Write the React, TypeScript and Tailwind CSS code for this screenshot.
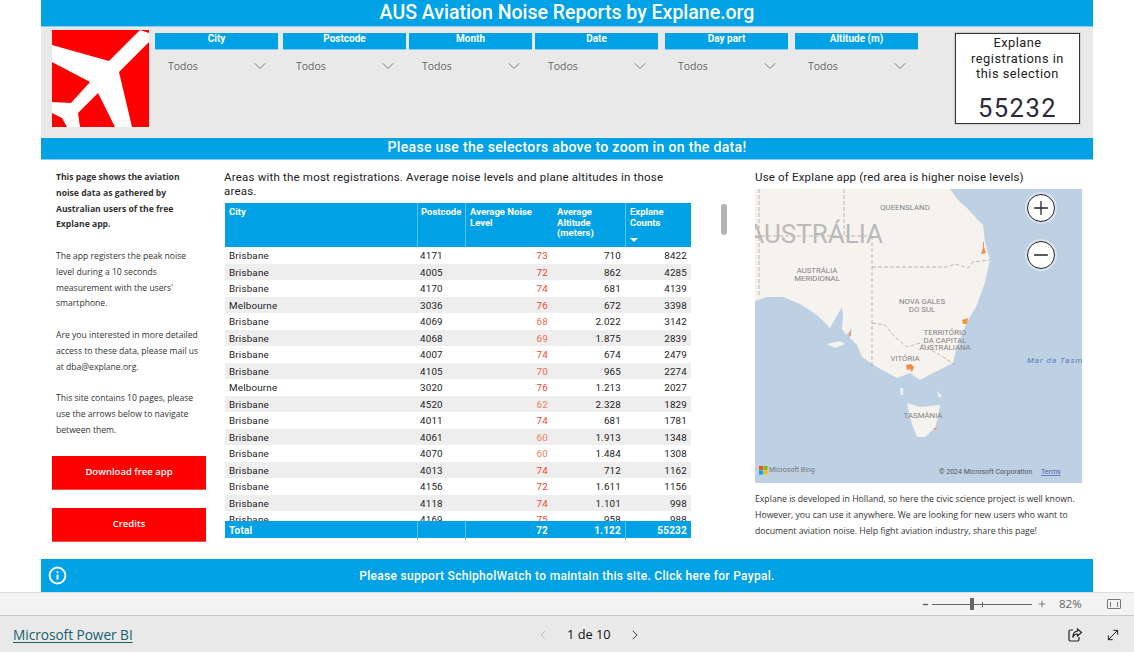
import { Info, ChevronLeft, ChevronRight, ChevronDown, Plus, Minus, MoveDiagonal } from 'lucide-react';

const din = 'font-["Roboto",sans-serif]';
const segoe = 'font-["Open_Sans",sans-serif]';

const SLICERS = [
    { label: 'City', cls: 'mr-[5px]' },
    { label: 'Postcode', cls: 'mr-[3px]' },
    { label: 'Month', cls: 'mr-[3px]' },
    { label: 'Date', cls: 'mr-[7px]' },
    { label: 'Day part', cls: 'mr-[7px]' },
    { label: 'Altitude (m)', cls: '' },
];

const ROWS: [string, string, number, string, string][] = [
    ['Brisbane', '4171', 73, '710', '8422'],
    ['Brisbane', '4005', 72, '862', '4285'],
    ['Brisbane', '4170', 74, '681', '4139'],
    ['Melbourne', '3036', 76, '672', '3398'],
    ['Brisbane', '4069', 68, '2.022', '3142'],
    ['Brisbane', '4068', 69, '1.875', '2839'],
    ['Brisbane', '4007', 74, '674', '2479'],
    ['Brisbane', '4105', 70, '965', '2274'],
    ['Melbourne', '3020', 76, '1.213', '2027'],
    ['Brisbane', '4520', 62, '2.328', '1829'],
    ['Brisbane', '4011', 74, '681', '1781'],
    ['Brisbane', '4061', 60, '1.913', '1348'],
    ['Brisbane', '4070', 60, '1.484', '1308'],
    ['Brisbane', '4013', 74, '712', '1162'],
    ['Brisbane', '4156', 72, '1.611', '1156'],
    ['Brisbane', '4118', 74, '1.101', '998'],
    ['Brisbane', '4169', 75, '958', '988'],
];

const COLS = 'grid grid-cols-[192px_48px_88px_72px_66px]';

const Logo = () => (
    <svg className="w-[97px] h-[97px] shrink-0" viewBox="0 0 97 97">
        <rect width="97" height="97" fill="#ff0000" />
        <polygon
            fill="#ffffff"
            points="88,0 97,3 97,12 67,42 80,97 63,97 46,63 26,83 28,97 15,97 10,88 0,83 0,72 19,73 38,52 0,32 0,15 57,31"
        />
    </svg>
);

const MapDrawing = () => (
    <svg className="block w-[327px] h-[294px]" viewBox="0 0 327 294">
        <rect width="327" height="294" fill="#bed0e4" />
        <path
            fill="#f6f3ef"
            d="M0 0 L195 0 L203 11 L212 19 L222 30 L228 36 L229 45 L230 53 L235 71 L230 93 L222 116 L212 133 L205 150 L200 165 L198 174 L178 184 L165 191 L155 184 L142 189 L122 178 L107 168 L102 156 L95 149 L97 139 L91 146 L87 140 L88 126 L87 118 L80 130 L75 139 L62 126 L45 115 L28 108 L12 108 L0 112 Z"
        />
        <path fill="#f6f3ef" d="M72 155 L85 152 L90 155 L80 159 Z" />
        <path fill="#f6f3ef" d="M152 214 L165 218 L185 216 L183 228 L180 239 L170 248 L162 248 L158 238 L155 228 Z" />
        <path fill="#f6f3ef" d="M145 199 L148 199 L148 206 L146 206 Z M182 202 L187 207 L184 209 Z" />
        <g fill="none" stroke="#a8a8a8" strokeWidth="0.8" strokeDasharray="4 2">
            <path d="M4 0 L4 108" />
            <path d="M89 0 L89 47" />
            <path d="M0 47 L117 47" />
            <path d="M117 47 L117 179" />
            <path d="M117 78 L192 78 L200 75 L213 79 L218 73 L235 71" />
            <path d="M117 134 L130 136 L140 148 L152 158 L165 154 L178 162 L185 166 L200 176" />
        </g>
        <g fill="#f58a4b">
            <path d="M228 53 L229 53 L229 58 L231 64 L226 65 L228 59 Z" />
            <path d="M207 131 L213 129 L212 135 L208 135 Z" fill="#f7992f" />
            <path d="M94 146 L96 141 L96 146 L94 148 Z" />
            <path d="M151 176 L156 175 L159 178 L157 183 L155 180 L152 181 Z" />
            <path d="M178 239 L182 239 L181 241 Z" />
        </g>
        <g className='font-["Roboto",sans-serif]' fill="#828282" textAnchor="middle">
            <text x="128" y="54" fontSize="26" textAnchor="end" fill="#b9b9b9">AUSTRÁLIA</text>
            <text x="150" y="21" fontSize="7.8">QUEENSLAND</text>
            <text x="62" y="84" fontSize="7.8">AUSTRÁLIA</text>
            <text x="62" y="92" fontSize="7.8">MERIDIONAL</text>
            <text x="167" y="115" fontSize="7.8">NOVA GALES</text>
            <text x="167" y="123" fontSize="7.8">DO SUL</text>
            <text x="190" y="146" fontSize="7.8">TERRITÓRIO</text>
            <text x="190" y="153.5" fontSize="7.8">DA CAPITAL</text>
            <text x="190" y="161" fontSize="7.8">AUSTRALIANA</text>
            <text x="150" y="172" fontSize="7.8">VITÓRIA</text>
            <text x="168" y="229" fontSize="7.8">TASMÂNIA</text>
            <text x="272" y="174" fontSize="8" fill="#5a7fc0" fontStyle="italic" textAnchor="start" letterSpacing="1">Mar da Tasmânia</text>
            <text x="14" y="283" fontSize="7" textAnchor="start" fill="#777777">Microsoft Bing</text>
            <text x="184" y="285" fontSize="7" textAnchor="start" fill="#555555">© 2024 Microsoft Corporation</text>
            <text x="286" y="285" fontSize="7" textAnchor="start" fill="#4a5fb0" textDecoration="underline">Terms</text>
        </g>
        <rect x="4" y="277" width="4" height="4" fill="#f25022" />
        <rect x="8.5" y="277" width="4" height="4" fill="#7fba00" />
        <rect x="4" y="281.5" width="4" height="4" fill="#00a4ef" />
        <rect x="8.5" y="281.5" width="4" height="4" fill="#ffb900" />
    </svg>
);

const MapButton = ({ cls, children }: { cls: string; children: React.ReactNode }) => (
    <div className={`absolute left-[272px] w-[28px] h-[28px] rounded-full bg-white border-[1.5px] border-[#222222] ring-2 ring-white/40 flex items-center justify-center ${cls}`}>
        {children}
    </div>
);

const ShareIcon = () => (
    <svg className="w-[16px] h-[16px] mr-[22px]" viewBox="0 0 16 16" fill="none" stroke="#222222" strokeWidth="1.2">
        <path d="M6 3 H3.5 a1.5 1.5 0 0 0 -1.5 1.5 V12.5 a1.5 1.5 0 0 0 1.5 1.5 H10.5 a1.5 1.5 0 0 0 1.5 -1.5 V10" />
        <path d="M10.5 2 L14.5 5.5 L10.5 9 V7 C8 7 6.5 8.5 6 10.5 C5.8 7 7.5 4.5 10.5 4 Z" />
    </svg>
);

export default function App() {
    return (
        <div className={`w-[1134px] h-[652px] bg-white overflow-hidden flex flex-col ${din}`}>
            <div className="ml-[41px] w-[1052px] h-[592px] shrink-0 flex flex-col">
                {/* Title */}
                <div className="h-[27px] shrink-0 bg-[#00a2e5] border-b border-[#7fd0f2] flex items-center justify-center text-white text-[19.5px] font-medium">
                    AUS Aviation Noise Reports by Explane.org
                </div>

                {/* Slicers */}
                <div className="h-[111px] shrink-0 bg-[#e9e9e9] flex pl-[11px] pt-[3px]">
                    <Logo />
                    <div className="flex ml-[6px] pt-[3px]">
                        {SLICERS.map(s => (
                            <div key={s.label} className={`w-[123px] ${s.cls}`}>
                                <div className="h-[17px] bg-[#00a2e5] border-b border-[#7fd0f2] text-white text-[10px] font-bold text-center leading-[12px]">
                                    {s.label}
                                </div>
                                <div className={`flex items-center justify-between mt-[6px] pl-[13px] pr-[8px] text-[10.5px] text-[#666666] ${segoe}`}>
                                    <span className="pt-[1px]">Todos</span>
                                    <ChevronDown className="w-[20px] h-[20px] text-[#666666]" strokeWidth={1} />
                                </div>
                            </div>
                        ))}
                    </div>
                    <div className="ml-[37px] mt-[3px] w-[125px] h-[91px] bg-white border border-[#333333] shadow-[0_0_0_1px_#d0d0d0] flex flex-col items-center text-[#222222]">
                        <div className="text-[12.8px] leading-[15.5px] text-center tracking-[0.5px] mt-[1px]">
                            Explane<br />registrations in<br />this selection
                        </div>
                        <div className="text-[25.5px] leading-[30px] tracking-[1.5px] mt-[11px] text-[#2b2b38]">55232</div>
                    </div>
                </div>

                <div className="h-[22px] shrink-0 bg-[#00a2e5] border-b border-[#7fd0f2] pb-[1px] flex items-center justify-center text-white text-[14.1px] font-medium tracking-[0.3px]">
                    Please use the selectors above to zoom in on the data!
                </div>

                {/* Content */}
                <div className="h-[399px] shrink-0 flex">
                    <div className="w-[184px] shrink-0 pl-[11px] pt-[10px]">
                        <div className={`w-[150px] pl-[4px] text-[8.6px] leading-[15.8px] text-[#333333] ${segoe}`}>
                            <p className="font-bold mb-[15.8px]">This page shows the aviation noise data as gathered by Australian users of the free Explane app.</p>
                            <p className="mb-[15.8px]">The app registers the peak noise level during a 10 seconds measurement with the users' smartphone.</p>
                            <p className="mb-[15.8px]">Are you interested in more detailed access to these data, please mail us at dba@explane.org.</p>
                            <p>This site contains 10 pages, please use the arrows below to navigate between them.</p>
                        </div>
                        <div className={`mt-[17px] w-[154px] h-[34px] bg-[#ff0000] border-b border-[#ff5050] text-white text-[9.5px] font-semibold flex items-center justify-center ${segoe}`}>
                            Download free app
                        </div>
                        <div className={`mt-[18px] w-[154px] h-[34px] bg-[#ff0000] border-b border-[#ff5050] text-white text-[9.5px] font-semibold flex items-center justify-center ${segoe}`}>
                            Credits
                        </div>
                    </div>

                    <div className="w-[530px] shrink-0 relative">
                        <div className="w-[470px] pt-[11px] text-[11.5px] leading-[13.5px] tracking-[0.2px] text-[#222222] h-[43px] ml-[-1px]">
                            Areas with the most registrations. Average noise levels and plane altitudes in those areas.
                        </div>
                        <div className="w-[466px] text-[9.8px] text-[#222222] tracking-[0.2px]">
                            <div className={`${COLS} h-[44px] bg-[#00a2e5] text-white font-bold leading-[10.5px] text-[9.5px] tracking-normal`}>
                                <div className="pl-[4px] pt-[4px]">City</div>
                                <div className="pl-[3px] pt-[4px] border-l border-[#5cc4ee]">Postcode</div>
                                <div className="pl-[4px] pt-[4px] border-l border-[#5cc4ee]">Average Noise Level</div>
                                <div className="pl-[4px] pt-[4px] whitespace-pre-line">{'Average\nAltitude\n(meters)'}</div>
                                <div className="pl-[4px] pt-[4px] border-l border-[#5cc4ee] relative">
                                    Explane Counts
                                    <div className="absolute left-[4px] bottom-[5px] w-0 h-0 border-l-[4px] border-r-[4px] border-t-[4px] border-l-transparent border-r-transparent border-t-white" />
                                </div>
                            </div>
                            <div className="h-[274px] overflow-hidden">
                                {ROWS.map((r, i) => (
                                    <div key={r[1]} className={`${COLS} h-[16.53px] leading-[17px] ${i % 2 === 1 ? 'bg-[#eeeeee]' : 'bg-white'}`}>
                                        <div className="pl-[4px]">{r[0]}</div>
                                        <div className="pl-[3px]">{r[1]}</div>
                                        <div className={`pr-[5px] text-right ${r[2] >= 72 ? 'text-[#f2452f]' : r[2] >= 68 ? 'text-[#f26a48]' : 'text-[#f0805a]'}`}>{r[2]}</div>
                                        <div className="pr-[4px] text-right">{r[3]}</div>
                                        <div className="pr-[4px] text-right">{r[4]}</div>
                                    </div>
                                ))}
                            </div>
                            <div className={`${COLS} h-[17px] bg-[#00a2e5] text-white font-bold leading-[19px] text-[10px]`}>
                                <div className="pl-[4px]">Total</div>
                                <div className="border-l border-[#5cc4ee]" />
                                <div className="pr-[5px] text-right border-l border-[#5cc4ee]">72</div>
                                <div className="pr-[4px] text-right">1.122</div>
                                <div className="pr-[4px] text-right border-l border-[#5cc4ee]">55232</div>
                            </div>
                        </div>
                        <div className="absolute left-[496px] top-[44px] w-[6px] h-[31px] rounded-[3px] bg-[#b3b3b3]" />
                    </div>

                    <div className="w-[327px] shrink-0">
                        <div className="h-[29px] pt-[11px] text-[11.5px] leading-[13.5px] tracking-[0.18px] text-[#222222] whitespace-nowrap">
                            Use of Explane app (red area is higher noise levels)
                        </div>
                        <div className="relative w-[327px] h-[294px] overflow-hidden">
                            <MapDrawing />
                            <MapButton cls="top-[5px]">
                                <Plus className="w-[22px] h-[22px] text-[#222222]" strokeWidth={1.4} />
                            </MapButton>
                            <MapButton cls="top-[52px]">
                                <Minus className="w-[22px] h-[22px] text-[#222222]" strokeWidth={1.4} />
                            </MapButton>
                        </div>
                        <div className={`pt-[8px] text-[8.7px] leading-[16px] text-[#333333] ${segoe}`}>
                            Explane is developed in Holland, so here the civic science project is well known. However, you can use it anywhere. We are looking for new users who want to document aviation noise. Help fight aviation industry, share this page!
                        </div>
                    </div>
                </div>

                {/* Support bar */}
                <div className="h-[33px] shrink-0 bg-[#00a2e5] flex items-center relative text-white text-[12px] font-medium tracking-[0.3px] justify-center">
                    <Info className="absolute left-[7px] top-[7px] w-[19px] h-[19px]" strokeWidth={2.5} />
                    Please support SchipholWatch to maintain this site. Click here for Paypal.
                </div>
            </div>

            {/* Zoom bar */}
            <div className="h-[24px] shrink-0 bg-[#f3f3f3] border-t border-[#dddddd] border-b border-b-[#c8c8c8] flex items-center justify-end text-[#666666] pr-[13px]">
                <Minus className="w-[7px] h-[7px] mr-[3px]" strokeWidth={5} />
                <div className="w-[100px] h-[1px] bg-[#666666] relative mr-[5px]">
                    <div className="absolute left-[38px] top-[-6px] w-[4px] h-[12px] bg-[#666666]" />
                    <div className="absolute left-[50px] top-[-2px] w-[1px] h-[5px] bg-[#666666]" />
                </div>
                <Plus className="w-[10px] h-[10px] mr-[12px]" strokeWidth={2} />
                <span className={`text-[11.5px] w-[22px] mr-[26px] ${segoe}`}>82%</span>
                <div className="w-[14px] h-[10px] border border-[#777777] rounded-[1px] relative flex items-center justify-center">
                    <div className="w-[8px] h-[5px] border-x border-[#777777]" />
                </div>
            </div>

            {/* Footer */}
            <div className={`flex-1 bg-[#e9e9e9] flex items-center relative pl-[13px] pt-[2px] ${segoe}`}>
                <span className="text-[13.6px] text-[#14616b] underline underline-offset-2">Microsoft Power BI</span>
                <div className="absolute left-[535px] top-[1px] h-full flex items-center text-[#111111]">
                    <ChevronLeft className="w-[16px] h-[16px] text-[#bbbbbb]" strokeWidth={1.5} />
                    <span className="ml-[16px] mr-[17px] text-[12.8px] w-[43px] whitespace-nowrap">1 de 10</span>
                    <ChevronRight className="w-[16px] h-[16px] text-[#444444]" strokeWidth={1.5} />
                </div>
                <div className="ml-auto flex items-center pr-[13px]">
                    <ShareIcon />
                    <MoveDiagonal className="w-[16px] h-[16px] text-[#222222]" strokeWidth={1.5} />
                </div>
            </div>
        </div>
    );
}
